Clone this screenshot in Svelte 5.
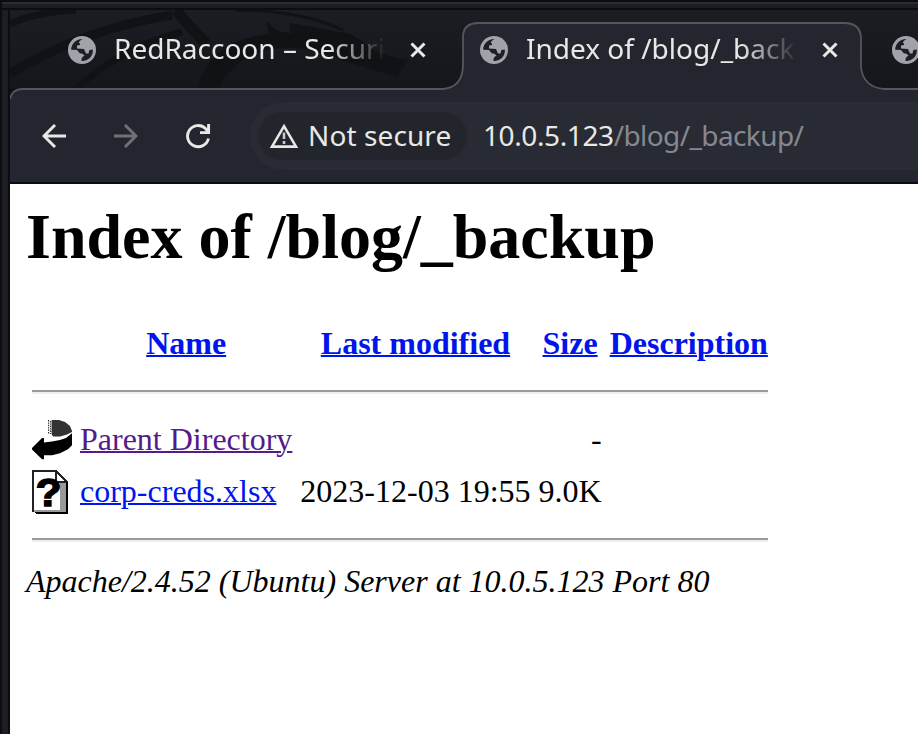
<script>
  const files = [
    { icon: 'back', name: 'Parent Directory', visited: true, modified: '', size: '-' },
    { icon: 'unknown', name: 'corp-creds.xlsx', visited: false, modified: '2023-12-03 19:55', size: '9.0K' }
  ];
</script>

{#snippet globe()}
  <svg class="globe" width="28" height="28" viewBox="0 0 28 28">
    <circle cx="14" cy="14" r="14" fill="#a0a4aa" />
    <path d="M14.5 3 C11 5 10 7 12 7.4 L12 9 L9 9.4 L9 12.5 L16 13 L18 17.5 L20.5 17.5 L21.4 14 L24.8 13.6 C25.2 18 23 22 19.5 23.6 C16 25.5 14 25 13.3 24.4 L14 21.5 L16.6 19.5 L13.8 17.5 L12 17.5 L9 14 L3.2 13.8 C3 8 8 2.8 14.5 3Z" fill="#1d1f25" />
  </svg>
{/snippet}

{#snippet close()}
  <svg class="close" width="16" height="16" viewBox="0 0 16 16">
    <path d="M1.5 1.5 L14.5 14.5 M14.5 1.5 L1.5 14.5" stroke="#e8e8e6" stroke-width="3" />
  </svg>
{/snippet}

<div class="window">
  <header class="tabs">
    <svg class="strip" width="908" height="92" viewBox="10 10 908 92">
      <g fill="none" stroke="#111216">
        <path d="M10 24 Q35 12 76 10" stroke-width="7" />
        <path d="M10 74 Q80 30 172 15" stroke-width="9" />
        <path d="M75 90 Q120 48 182 32" stroke-width="7" />
        <path d="M176 10 Q192 30 207 44" stroke-width="11" />
        <path d="M235 10 Q300 10 343 30" stroke-width="3" />
      </g>
      <path d="M197 90 Q208 40 270 34 Q266 26 267 21 Q276 34 292 33 Q288 28 290 23 Q320 28 350 34 L362 41 Q372 54 408 60 L397 77 L350 63 Q290 38 252 55 Q230 65 218 90Z" fill="#111216" />
      <path d="M10 102 Q10 89 23 89 H443 Q463 87 463 65 V37 Q463 23 479 23 H844 Q861 23 861 39 V67 Q863 87 884 89 H918 V102Z" fill="#23262e" />
      <path d="M10 102 Q10 89 23 89 H443 Q463 87 463 65 V37 Q463 23 479 23 H844 Q861 23 861 39 V67 Q863 87 884 89 H918" fill="none" stroke="#54575c" stroke-width="1.8" />
    </svg>
    <div class="tab first">{@render globe()}<span class="title">RedRaccoon – Securi</span>{@render close()}</div>
    <div class="tab">{@render globe()}<span class="title">Index of /blog/_back</span>{@render close()}</div>
    <div class="tab">{@render globe()}</div>
  </header>

  <nav class="toolbar">
    <svg width="24" height="24" viewBox="0 0 24 24" fill="none" stroke="#e8e8e6" stroke-width="2.9"><path d="M24 12H2M13 1L2 12L13 23" /></svg>
    <svg width="24" height="24" viewBox="0 0 24 24" fill="none" stroke="#707278" stroke-width="2.9"><path d="M0 12H22M11 1L22 12L11 23" /></svg>
    <svg width="26" height="26" viewBox="0 0 26 26" fill="none" stroke="#e8e8e6" stroke-width="2.9"><path d="M23.5 15.5A10.6 10.6 0 1 1 20.5 5.5L23 8.5M23.6 1V9.6H15" /></svg>
    <div class="omnibox">
      <div class="chip">
        <svg width="30" height="26" viewBox="0 0 30 26"><path d="M15 3.2L27 23.6H3Z" fill="none" stroke="#e8e8e6" stroke-width="2.6" /><path d="M15 9.5V16M15 18V21" stroke="#c8c9ca" stroke-width="2.6" /></svg>
        <span>Not secure</span>
      </div>
      <div class="url">10.0.5.123<span>/blog/_backup/</span></div>
    </div>
  </nav>

  <main>
    <h1>Index of /blog/_backup</h1>
    <table>
      <tbody>
        <tr>
          <th class="image"><div class="icon"></div></th>
          <th><a href="#name">Name</a></th>
          <th><a href="#modified">Last modified</a></th>
          <th><a href="#size">Size</a></th>
          <th><a href="#description">Description</a></th>
        </tr>
        <tr><th class="image" colspan="5"><hr /></th></tr>
        {#each files as file}
          <tr>
            <td class="image">
              <svg class="icon" viewBox="0 0 20 22">
                {#if file.icon === 'back'}
                  <g transform="translate(0 1)">
                    <path d="M9.8 0H13.5L16.5 1L19 3L20 5.5V6L17.5 7.2L14 8.2H10.5L9.8 7Z" fill="#333" />
                    <path d="M8.3 0V7M9.3 .5V7" stroke="#333" stroke-width=".6" stroke-dasharray=".7 .5" />
                    <path d="M20 6.6V12.6L18 14.6L14 16.6L10 17.6H6V19.6H5L0 14.7V14L5 9H6V11.2L10 10.8L14 10L17 9Z" />
                  </g>
                {:else}
                  <g shape-rendering="crispEdges">
                    <path d="M1.5 1H18V22H2V21.5H1.5Z" fill="#000" />
                    <path d="M12.5 0H18V6Z" fill="#fff" />
                    <path d="M.5 .5H12L17.5 6V20.5H.5Z" fill="#fff" stroke="#222" />
                    <path d="M14 6.5H17V20H14Z" fill="#999" />
                    <path d="M1 20H17V21H1Z" fill="#999" />
                  </g>
                  <path d="M12 .5V6H17.5" fill="none" stroke="#222" />
                  <path d="M17.5 6V22M2 21.5H18" stroke="#000" />
                  <text class="mark" transform="translate(1.9 17.8) scale(1.08 1)">?</text>
                {/if}
              </svg>
            </td>
            <td><a class:visited={file.visited} href="#file">{file.name}</a></td>
            <td class="right">{file.modified}</td>
            <td class="right">{file.size}</td>
            <td></td>
          </tr>
        {/each}
        <tr><th class="image" colspan="5"><hr /></th></tr>
      </tbody>
    </table>
    <address>Apache/2.4.52 (Ubuntu) Server at 10.0.5.123 Port 80</address>
  </main>
</div>

<style>
  :global(body) { margin: 0; background: #0c0d10; }
  .window {
    box-sizing: border-box;
    width: 918px;
    height: 734px;
    overflow: hidden;
    padding: 10px 0 0 10px;
    display: flex;
    flex-direction: column;
    background:
      linear-gradient(#0c0d10 0 2px, #2c2d31 2px 4px, #1d1e23 4px 8px, #0c0d10 8px 10px) 2px 0 / 100% 10px no-repeat,
      linear-gradient(90deg, #0c0d10 0 2px, #1d1e23 2px 8px, #0c0d10 8px);
    font: 28px/38px "Noto Sans", sans-serif;
    color: #e8e8e6;
  }
  .tabs {
    position: relative;
    height: 79px;
    flex: none;
    display: flex;
    background: linear-gradient(#1c1d22, #15161b);
  }
  .strip { position: absolute; left: 0; top: 0; }
  .tab {
    position: relative;
    flex: none;
    box-sizing: border-box;
    width: 412px;
    height: 79px;
    display: flex;
    align-items: center;
    padding-left: 12px;
  }
  .tab.first { width: 458px; padding-left: 58px; }
  .globe { flex: none; margin-top: 1px; }
  .title {
    width: 272px;
    margin-left: 18px;
    margin-bottom: 3px;
    white-space: nowrap;
    mask-image: linear-gradient(90deg, #000 215px, transparent 272px);
  }
  .close { margin-left: 24px; margin-top: 1px; }
  .toolbar {
    position: relative;
    height: 93px;
    flex: none;
    display: flex;
    align-items: center;
    padding-left: 32px;
    background: linear-gradient(#23262e, #23262e) 0 10px no-repeat;
    border-bottom: 2px solid #0c0d10;
  }
  .toolbar > svg { margin-right: 48px; flex: none; }
  .toolbar > svg:nth-child(2) { margin-right: 47px; }
  .toolbar > svg:nth-child(3) { margin-right: 39px; }
  .omnibox {
    flex: 1;
    height: 68px;
    display: flex;
    align-items: center;
    padding-left: 8px;
    border-radius: 34px 0 0 34px;
    background: #282b33;
  }
  .chip {
    width: 209px;
    height: 48px;
    box-sizing: border-box;
    display: flex;
    align-items: center;
    gap: 9px;
    padding-left: 11px;
    border-radius: 24px;
    background: #22252c;
    white-space: nowrap;
  }
  .chip span { margin-bottom: 1px; letter-spacing: .1px; }
  .url { margin-left: 16px; margin-bottom: 1px; white-space: nowrap; letter-spacing: -.4px; }
  .url span { color: #85888e; letter-spacing: -.6px; }
  main {
    flex: 1;
    padding: 16px;
    background: #fff;
    color: #000;
    font: 32px "Liberation Serif", serif;
  }
  h1 { font-size: 64px; margin: 0 0 42px; white-space: nowrap; }
  table { border-spacing: 4px; border-collapse: separate; font-size: 32px; }
  th, td { padding: 1px 2px 3px; white-space: nowrap; }
  .image { padding: 2px; }
  .icon { display: block; width: 40px; height: 44px; }
  .mark { font: bold 19.5px "Liberation Sans", sans-serif; stroke: #000; stroke-width: .8px; }
  .right { text-align: right; }
  hr {
    margin: 16px 0;
    border: 0;
    height: 2px;
    background: #9a9a9a;
    border-bottom: 2px solid #eee;
  }
  a { color: #0014ee; text-decoration: underline; text-decoration-thickness: 2px; }
  a.visited { color: #551a8b; }
  address { font-style: italic; line-height: 35px; white-space: nowrap; }
</style>
